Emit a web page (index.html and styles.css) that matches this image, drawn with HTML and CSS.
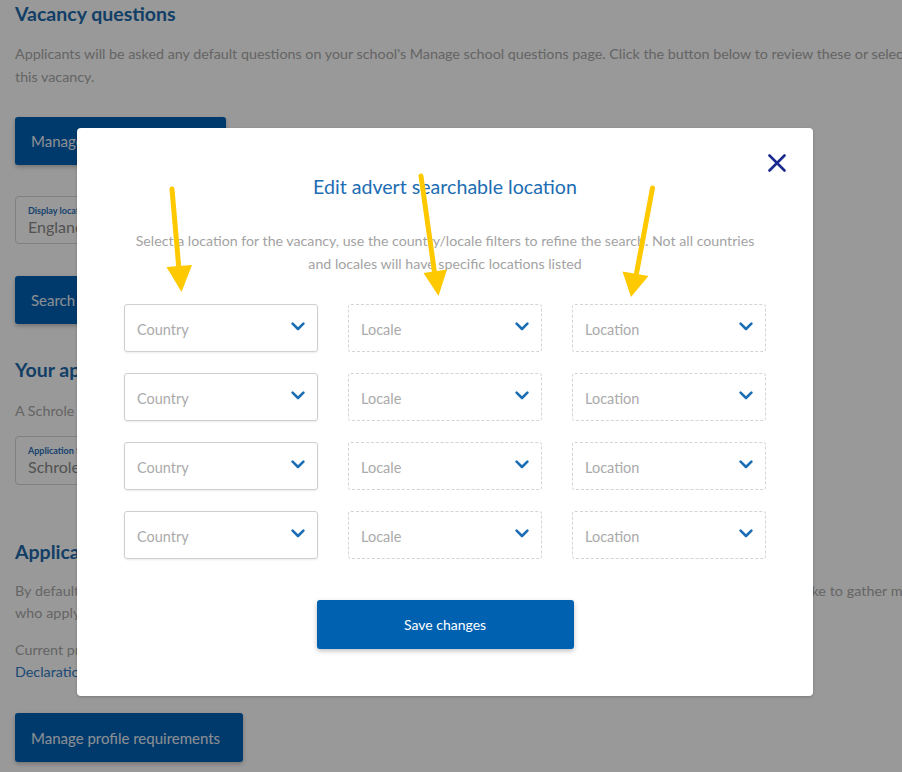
FILE: index.html
```html
<!DOCTYPE html>
<html lang="en">
<head>
<meta charset="utf-8">
<title>Edit advert searchable location</title>
<link rel="stylesheet" href="styles.css">
</head>
<body>
<div class="page">
  <h2 class="heading">Vacancy questions</h2>
  <p class="text text-first">Applicants will be asked any default questions on your school's Manage school questions page. Click the button below to review these or select additional questions for<br>this vacancy.</p>
  <button class="btn btn-questions">Manage vacancy questions</button>
  <div class="field field-display">
    <span class="field-label">Display location</span>
    <span class="field-value">England</span>
  </div>
  <button class="btn btn-search">Search locations</button>
  <h2 class="heading heading-app">Your application form</h2>
  <p class="text text-schrole">A Schrole application form will be used.</p>
  <div class="field field-app">
    <span class="field-label">Application form</span>
    <span class="field-value">Schrole</span>
  </div>
  <h2 class="heading heading-profile">Application profile requirements</h2>
  <p class="text text-default">By default, applicants must complete the standard profile sections before they apply for this vacancy on Schrole. If you would like to gather more information from candidates<br>who apply, you can add further requirements below.</p>
  <p class="text text-current">Current profile requirements:<br><span class="link">Declaration, References, Employment history</span></p>
  <button class="btn btn-profile">Manage profile requirements</button>
</div>

<div class="overlay"></div>

<div class="modal">
  <button class="close" aria-label="Close">
    <svg width="18" height="18" viewBox="0 0 18 18"><path d="M1.5 1.5 L16.5 16.5 M16.5 1.5 L1.5 16.5" stroke="#1b2a8f" stroke-width="2.6" stroke-linecap="round"/></svg>
  </button>
  <h3 class="modal-title">Edit advert searchable location</h3>
  <p class="modal-sub">Select a location for the vacancy, use the country/locale filters to refine the search. Not all countries<br>and locales will have specific locations listed</p>
  <div class="grid">
    <div class="select active"><span>Country</span><svg class="chev" viewBox="0 0 14 9"><path d="M1.6 1.6 L7 7 L12.4 1.6" fill="none" stroke="#1c6db3" stroke-width="2.6" stroke-linecap="round" stroke-linejoin="round"/></svg></div>
    <div class="select disabled"><span>Locale</span><svg class="chev" viewBox="0 0 14 9"><path d="M1.6 1.6 L7 7 L12.4 1.6" fill="none" stroke="#1c6db3" stroke-width="2.6" stroke-linecap="round" stroke-linejoin="round"/></svg></div>
    <div class="select disabled"><span>Location</span><svg class="chev" viewBox="0 0 14 9"><path d="M1.6 1.6 L7 7 L12.4 1.6" fill="none" stroke="#1c6db3" stroke-width="2.6" stroke-linecap="round" stroke-linejoin="round"/></svg></div>

    <div class="select active"><span>Country</span><svg class="chev" viewBox="0 0 14 9"><path d="M1.6 1.6 L7 7 L12.4 1.6" fill="none" stroke="#1c6db3" stroke-width="2.6" stroke-linecap="round" stroke-linejoin="round"/></svg></div>
    <div class="select disabled"><span>Locale</span><svg class="chev" viewBox="0 0 14 9"><path d="M1.6 1.6 L7 7 L12.4 1.6" fill="none" stroke="#1c6db3" stroke-width="2.6" stroke-linecap="round" stroke-linejoin="round"/></svg></div>
    <div class="select disabled"><span>Location</span><svg class="chev" viewBox="0 0 14 9"><path d="M1.6 1.6 L7 7 L12.4 1.6" fill="none" stroke="#1c6db3" stroke-width="2.6" stroke-linecap="round" stroke-linejoin="round"/></svg></div>

    <div class="select active"><span>Country</span><svg class="chev" viewBox="0 0 14 9"><path d="M1.6 1.6 L7 7 L12.4 1.6" fill="none" stroke="#1c6db3" stroke-width="2.6" stroke-linecap="round" stroke-linejoin="round"/></svg></div>
    <div class="select disabled"><span>Locale</span><svg class="chev" viewBox="0 0 14 9"><path d="M1.6 1.6 L7 7 L12.4 1.6" fill="none" stroke="#1c6db3" stroke-width="2.6" stroke-linecap="round" stroke-linejoin="round"/></svg></div>
    <div class="select disabled"><span>Location</span><svg class="chev" viewBox="0 0 14 9"><path d="M1.6 1.6 L7 7 L12.4 1.6" fill="none" stroke="#1c6db3" stroke-width="2.6" stroke-linecap="round" stroke-linejoin="round"/></svg></div>

    <div class="select active"><span>Country</span><svg class="chev" viewBox="0 0 14 9"><path d="M1.6 1.6 L7 7 L12.4 1.6" fill="none" stroke="#1c6db3" stroke-width="2.6" stroke-linecap="round" stroke-linejoin="round"/></svg></div>
    <div class="select disabled"><span>Locale</span><svg class="chev" viewBox="0 0 14 9"><path d="M1.6 1.6 L7 7 L12.4 1.6" fill="none" stroke="#1c6db3" stroke-width="2.6" stroke-linecap="round" stroke-linejoin="round"/></svg></div>
    <div class="select disabled"><span>Location</span><svg class="chev" viewBox="0 0 14 9"><path d="M1.6 1.6 L7 7 L12.4 1.6" fill="none" stroke="#1c6db3" stroke-width="2.6" stroke-linecap="round" stroke-linejoin="round"/></svg></div>
  </div>
  <div class="actions">
    <button class="save">Save changes</button>
  </div>
</div>

<svg class="arrows" width="902" height="772" viewBox="0 0 902 772">
  <g stroke="#ffc900" stroke-width="5" stroke-linecap="round" fill="#ffc900">
    <line x1="172" y1="189" x2="179" y2="270"/>
    <line x1="421" y1="176" x2="435" y2="276"/>
    <line x1="652.5" y1="188" x2="636" y2="276"/>
  </g>
  <g fill="#ffc900">
    <polygon points="166.5,267 192,265 181.5,292"/>
    <polygon points="423.5,273 447,269.5 438.5,296"/>
    <polygon points="622.5,271.5 648.5,276 631,297"/>
  </g>
</svg>
</body>
</html>
```

FILE: styles.css
```css
html, body {
  margin: 0;
  padding: 0;
}
body {
  width: 902px;
  height: 772px;
  overflow: hidden;
  background: #ffffff;
  font-family: Lato, "Open Sans", "Liberation Sans", sans-serif;
  position: relative;
}

.page {
  width: 1100px;
  padding: 0 15px;
  box-sizing: border-box;
}

.heading {
  margin: 0;
  font-size: 19.5px;
  line-height: 28px;
  font-weight: 700;
  color: #2069ab;
}
.heading-app { margin-top: 32px; }
.heading-profile { margin-top: 53px; }

.text {
  margin: 0;
  font-size: 14.3px;
  line-height: 23px;
  color: #a8a8a8;
  white-space: nowrap;
}
.text-first { margin-top: 13.5px; }
.text-schrole { margin-top: 14.5px; }
.text-default { margin-top: 14px; line-height: 22px; letter-spacing: 0.05px; }
.text-current { margin-top: 15px; line-height: 22px; }
.link { color: #2f79c2; }

.btn {
  display: block;
  border: none;
  background: #0061b5;
  color: #e8eef5;
  font-family: inherit;
  font-size: 15px;
  height: 48px;
  padding: 0 16px;
  border-radius: 3px;
  text-align: left;
  box-shadow: 0 2px 4px rgba(0,0,0,0.25);
}
.btn-questions { margin-top: 29.5px; width: 211px; }
.btn-search { margin-top: 32px; width: 220px; }
.btn-profile { margin-top: 30px; width: 228px; height: 49px; }

.field {
  display: flex;
  flex-direction: column;
  width: 420px;
  height: 48px;
  box-sizing: border-box;
  border: 1px solid #d6d6d6;
  border-radius: 4px;
  padding: 8px 12px 0;
}
.field-display { margin-top: 31px; }
.field-app { margin-top: 14.5px; height: 49px; }
.field-label {
  font-size: 9px;
  line-height: 12px;
  font-weight: 700;
  color: #2a6fb8;
}
.field-value {
  font-size: 16px;
  line-height: 20px;
  color: #8a8a8a;
}

.overlay {
  position: absolute;
  inset: 0;
  background: rgba(0,0,0,0.4);
}

.modal {
  position: absolute;
  left: 77px;
  top: 128px;
  width: 736px;
  height: 568px;
  box-sizing: border-box;
  padding: 47px;
  background: #ffffff;
  border-radius: 4px;
  box-shadow: 0 1px 3px rgba(0,0,0,0.2);
  display: flex;
  flex-direction: column;
  align-items: center;
}

.close {
  position: absolute;
  top: 26px;
  right: 27px;
  width: 18px;
  height: 18px;
  padding: 0;
  border: none;
  background: none;
  display: flex;
}

.modal-title {
  margin: 0;
  font-size: 19.6px;
  line-height: 24px;
  font-weight: 400;
  color: #1c6db3;
  text-align: center;
}

.modal-sub {
  margin: 29.5px 0 0;
  font-size: 14.2px;
  line-height: 23px;
  color: #a3a3a3;
  text-align: center;
  white-space: nowrap;
}

.grid {
  margin-top: 29.5px;
  display: grid;
  grid-template-columns: repeat(3, 194px);
  grid-auto-rows: 48px;
  column-gap: 30px;
  row-gap: 21px;
}

.select {
  box-sizing: border-box;
  display: flex;
  align-items: center;
  justify-content: space-between;
  padding: 0 12px 0 12px;
  border-radius: 3px;
  font-size: 14.5px;
  color: #aaaaaa;
}
.select span { padding-top: 2px; }
.select.active {
  border: 1px solid #cfcfcf;
  box-shadow: 0 1px 2px rgba(0,0,0,0.08);
}
.select.disabled {
  border: 1px dashed #d4d4d4;
}
.chev {
  width: 14px;
  height: 9px;
  margin-bottom: 3px;
}

.actions {
  margin-top: 41px;
  display: flex;
  justify-content: center;
}
.save {
  width: 257px;
  height: 49px;
  border: none;
  border-radius: 3px;
  background: #0061b1;
  color: #ffffff;
  font-family: inherit;
  font-size: 14px;
  box-shadow: 0 2px 5px rgba(0,0,0,0.25);
}

.arrows {
  position: absolute;
  left: 0;
  top: 0;
  pointer-events: none;
}
```
